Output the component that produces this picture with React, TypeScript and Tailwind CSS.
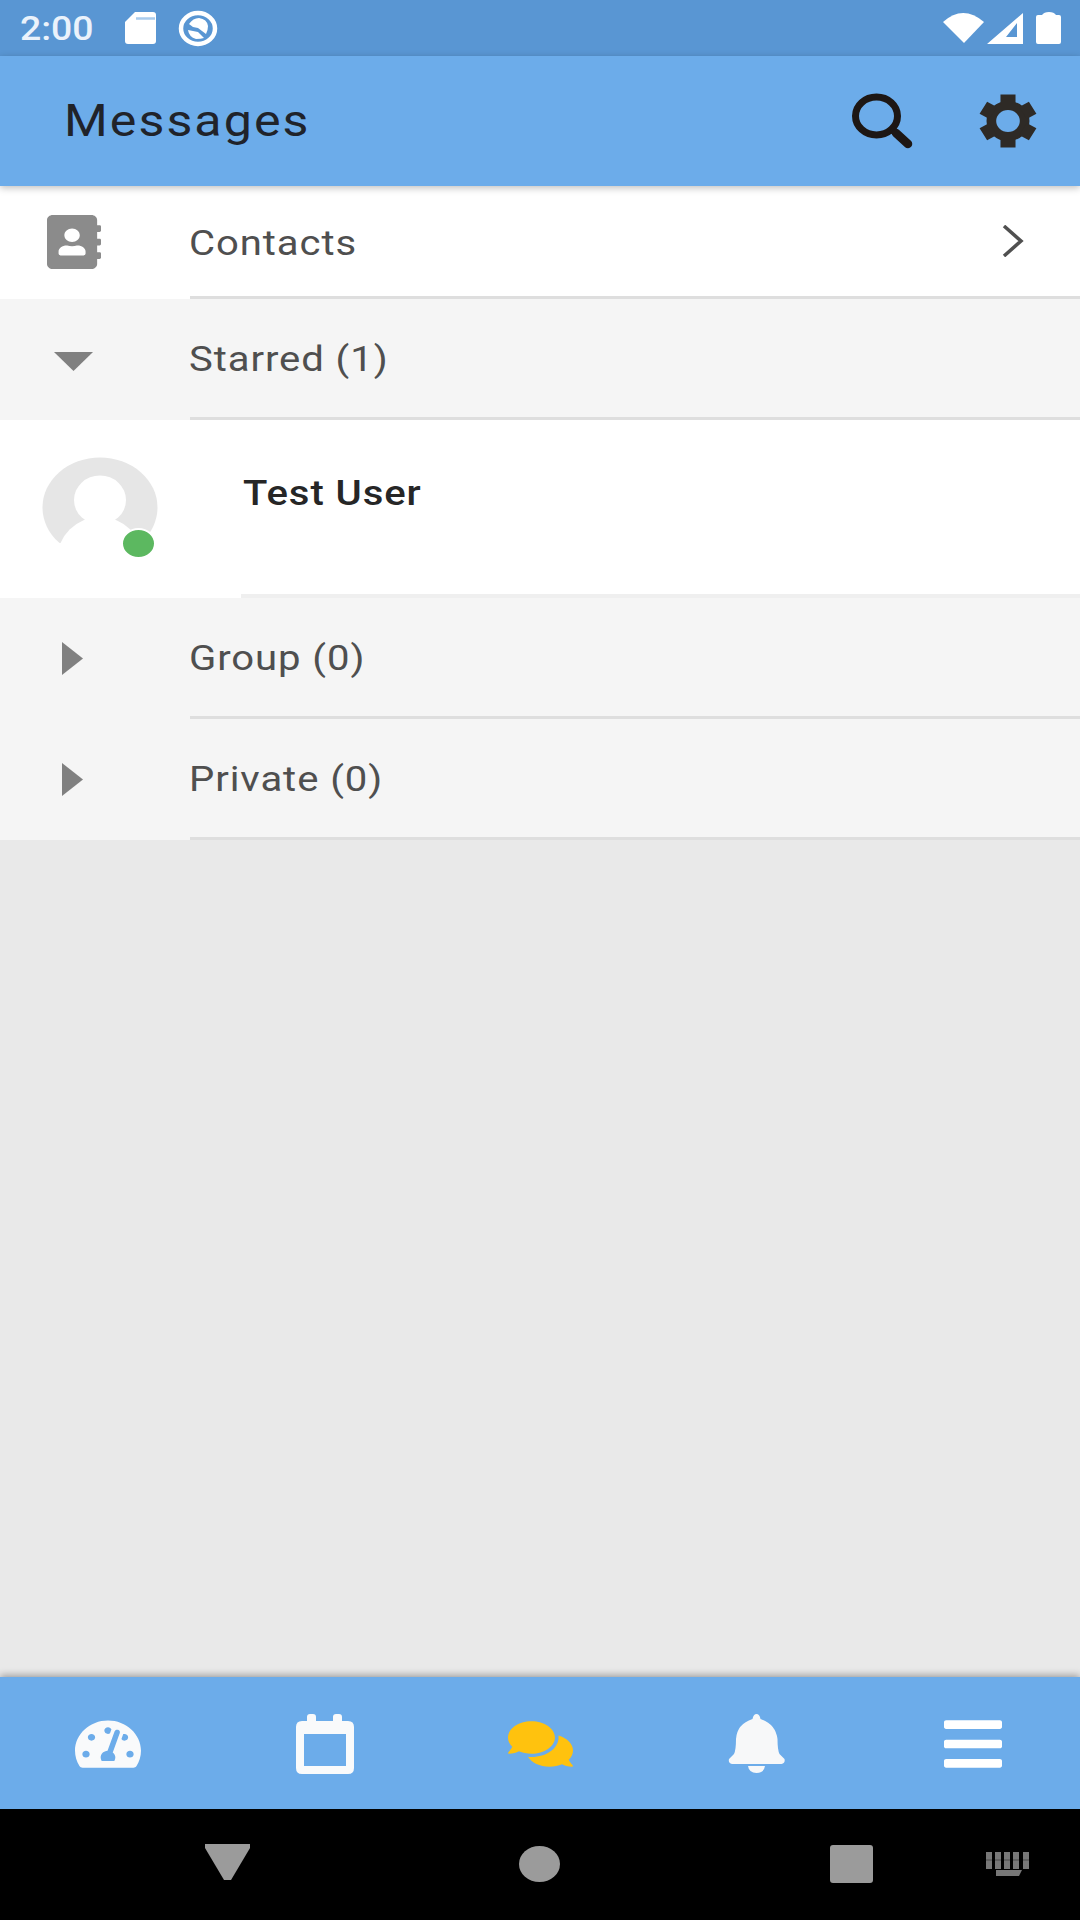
import type { ReactNode } from "react";
import {
  FaAddressBook,
  FaBars,
  FaComments,
  FaTachometerAlt,
} from "react-icons/fa";

interface GroupRowProps {
  label: string;
  open?: boolean;
}

function StatusBar() {
  return (
    <div className="h-[56px] shrink-0 bg-[#5996d3] flex items-center text-white">
      <span className="w-[104px] pl-[20px] text-[34px] leading-none font-medium text-[#eaf2fb]">
        <span className="inline-block origin-left scale-x-[1.1]">2:00</span>
      </span>
      <svg className="ml-[20px] w-[33px] h-[34px]" viewBox="0 0 33 34">
        <path
          d="M11 1h18q3 0 3 3v26q0 3-3 3H4q-3 0-3-3V11z"
          fill="currentColor"
        />
        <path d="M12 7.500h19" stroke="#a9cbed" strokeWidth="2.500" />
      </svg>
      <svg className="ml-[21px] w-[40px] h-[37px]" viewBox="0 0 40 37" fill="none">
        <ellipse cx="20" cy="18.500" rx="17" ry="15.500" stroke="currentColor" strokeWidth="4.500" />
        <path
          d="M11 14q4-6 10-6 8 1 9 8 0 4-2 8l-8-6-5-1z"
          fill="currentColor"
        />
        <path d="M10 20q1 7 8 9 5 0 8-1l-6-6z" fill="currentColor" />
      </svg>
      <svg className="ml-auto mr-[17px] w-[122px] h-[36px]" viewBox="0 0 122 36">
        <path d="M2 12q20-18 41 0L23 33z" fill="currentColor" />
        <path
          d="M46 34L82 3v31zM65 27h11V13z"
          fill="currentColor"
          fillRule="evenodd"
        />
        <path
          d="M97 5h4q2-3 7-3t7 3h3q2 0 2 2v25q0 2-2 2H97q-2 0-2-2V7q0-2 2-2z"
          fill="currentColor"
        />
      </svg>
    </div>
  );
}

function GearIcon() {
  return (
    <svg
      className="ml-[64px] w-[58px] h-[54px] text-[#2e2a26]"
      viewBox="-27 -27 54 54"
      preserveAspectRatio="none"
      fill="none"
      stroke="currentColor"
    >
      <circle r="15.500" strokeWidth="9" />
      {[0, 60, 120].map((angle) => (
        <path
          key={angle}
          d="M0-26.500V-16M0 16v10.500"
          strokeWidth="14"
          transform={`rotate(${angle})`}
        />
      ))}
    </svg>
  );
}

function Header() {
  return (
    <header className="relative z-10 h-[130px] shrink-0 bg-[#6cacea] flex items-center pl-[64px] pr-[43px] shadow-[0_2px_7px_rgba(0,0,0,0.25)]">
      <h1 className="origin-left scale-x-[1.14] text-[44px] leading-none tracking-[1.8px] text-[#20232a]">
        Messages
      </h1>
      <svg
        className="ml-auto w-[64px] h-[58px] text-[#1d1715]"
        viewBox="0 0 64 58"
        fill="none"
        stroke="currentColor"
      >
        <ellipse cx="25.500" cy="24" rx="21" ry="19" strokeWidth="7" />
        <path d="M40 37l5 4" strokeWidth="7" />
        <path d="M45 41l12 11" strokeWidth="8.500" strokeLinecap="round" />
      </svg>
      <GearIcon />
    </header>
  );
}

function ListRow({ icon, children }: { icon: ReactNode; children: ReactNode }) {
  return (
    <>
      <div className="w-[190px] shrink-0 flex items-center">{icon}</div>
      <div className="flex-1 flex items-center border-b-[3px] border-[#dedede] text-[35px] leading-none text-[#4f4f4f]">
        {children}
      </div>
    </>
  );
}

function Label({ text }: { text: string }) {
  return (
    <span className="inline-block origin-left scale-x-[1.145] tracking-[0.8px]">
      {text}
    </span>
  );
}

function GroupRow({ label, open }: GroupRowProps) {
  return (
    <div className="h-[121px] shrink-0 bg-[#f5f5f5] flex">
      <ListRow
        icon={
          open ? (
            <svg className="ml-[54px] mt-[3px] w-[39px] h-[19px]" viewBox="0 0 39 19">
              <path d="M0 0h39L19.500 19z" fill="#808080" />
            </svg>
          ) : (
            <svg className="ml-[62px] w-[21px] h-[33px]" viewBox="0 0 21 33">
              <path d="M0 0v33l21-16.500z" fill="#808080" />
            </svg>
          )
        }
      >
        <div className="pt-[3px] -ml-px">
          <Label text={label} />
        </div>
      </ListRow>
    </div>
  );
}

function Avatar() {
  return (
    <div className="relative ml-[42px] mt-[37px] w-[116px] h-[102px]">
      <svg className="w-full h-full" viewBox="0 0 116 102">
        <ellipse cx="58" cy="50.500" rx="57.500" ry="50" fill="#e6e6e6" />
        <ellipse cx="58" cy="43" rx="26" ry="24.500" fill="#fff" />
        <ellipse cx="58" cy="103" rx="43" ry="43" fill="#fff" />
        <path d="M0 86h116v16H0z" fill="#fff" />
      </svg>
      <div className="absolute left-[79px] top-[71px] w-[35px] h-[31px] rounded-[50%] border-2 border-white bg-[#5cb860]" />
    </div>
  );
}

const tabs = [
  {
    key: "dashboard",
    icon: (
      <FaTachometerAlt
        className="w-[66px] h-[54px] text-[#f9fafb]"
        preserveAspectRatio="none"
      />
    ),
  },
  {
    key: "calendar",
    icon: (
      <svg className="ml-px w-[60px] h-[60px] text-[#f9fafb]" viewBox="0 0 60 60">
        <path
          d="M7 7h5V3q0-3 3-3h3q3 0 3 3v4h17V3q0-3 3-3h3q3 0 3 3v4h6q6 0 6 6v41q0 6-6 6H7q-6 0-6-6V13q0-6 6-6zM9 20v32h42V20z"
          fill="currentColor"
          fillRule="evenodd"
        />
      </svg>
    ),
  },
  {
    key: "messages",
    icon: (
      <FaComments
        className="ml-px w-[65px] h-[52px] text-[#ffc20e]"
        preserveAspectRatio="none"
      />
    ),
  },
  {
    key: "notifications",
    icon: (
      <svg className="ml-px w-[57px] h-[60px] text-[#f7f8f9]" viewBox="0 0 57 60">
        <path
          d="M28.500 0q3 0 4 5 15 5 17 20 0 11 2 15l5 5q1 4-3 5H4q-4-1-3-5l5-5q2-4 2-15Q9 10 24.500 5q1-5 4-5z"
          fill="currentColor"
        />
        <path d="M20 52h17q-1 7-8.500 7T20 52z" fill="currentColor" />
      </svg>
    ),
  },
  {
    key: "menu",
    icon: (
      <FaBars
        className="ml-[2px] w-[58px] h-[62px] text-white"
        preserveAspectRatio="none"
      />
    ),
  },
];

function TabBar() {
  return (
    <nav className="h-[132px] shrink-0 bg-[#6cacea] flex pt-px shadow-[0_-2px_7px_rgba(0,0,0,0.32)]">
      {tabs.map((tab) => (
        <button key={tab.key} className="flex-1 flex items-center justify-center">
          {tab.icon}
        </button>
      ))}
    </nav>
  );
}

function SystemNav() {
  return (
    <div className="h-[111px] shrink-0 bg-black flex items-center pb-[2px] text-[#9b9b9b]">
      <svg className="ml-[205px] -mt-[4px] w-[45px] h-[36px]" viewBox="0 0 45 36">
        <path d="M0 0h45v4L26 36h-7L0 4z" fill="currentColor" />
      </svg>
      <div className="ml-[269px] w-[41px] h-[36px] rounded-[50%] bg-current" />
      <div className="ml-[270px] w-[43px] h-[38px] rounded-[3px] bg-current" />
      <svg className="ml-[113px] w-[45px] h-[24px] text-[#777777]" viewBox="0 0 45 24">
        <path
          d="M3 0v17M12 0v17M21 0v17M30 0v17M40 0v17"
          stroke="currentColor"
          strokeWidth="6"
        />
        <path d="M0 8h45" stroke="#000" strokeOpacity="0.2" strokeWidth="2" />
        <path d="M10 18h26l-3 6H10z" fill="currentColor" />
      </svg>
    </div>
  );
}

export default function App() {
  return (
    <div className="w-[1080px] h-[1920px] overflow-hidden flex flex-col bg-[#e9e9e9] font-[Roboto,sans-serif]">
      <StatusBar />
      <Header />
      <main className="flex-1 flex flex-col">
        <div className="h-[113px] shrink-0 bg-white flex">
          <ListRow
            icon={
              <FaAddressBook
                className="ml-[47px] mb-[2px] w-[54px] h-[54px] text-[#8b8b8b]"
                preserveAspectRatio="none"
              />
            }
          >
            <div className="pt-[4px] -ml-px">
              <Label text="Contacts" />
            </div>
            <svg
              className="ml-auto mr-[56px] w-[22px] h-[32px]"
              viewBox="0 0 22 32"
              fill="none"
            >
              <path d="M2 1l17 15L2 31" stroke="#505050" strokeWidth="3.500" />
            </svg>
          </ListRow>
        </div>
        <GroupRow label="Starred (1)" open />
        <div className="h-[178px] shrink-0 bg-white flex">
          <div className="w-[241px] shrink-0">
            <Avatar />
          </div>
          <div className="flex-1 border-b-4 border-[#efefef] pt-[56px] pl-[2px] text-[35px] leading-none font-medium text-[#262626]">
            <Label text="Test User" />
          </div>
        </div>
        <GroupRow label="Group (0)" />
        <GroupRow label="Private (0)" />
      </main>
      <TabBar />
      <SystemNav />
    </div>
  );
}
